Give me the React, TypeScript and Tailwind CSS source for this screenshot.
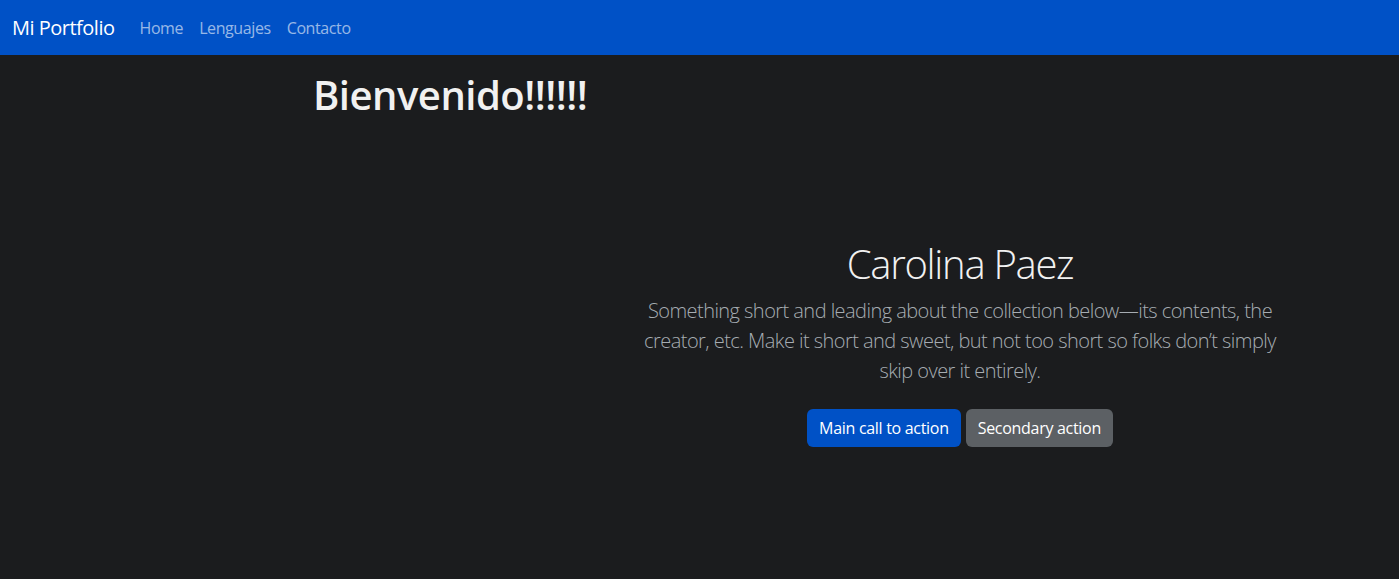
export default function App() {
  const font = { fontFamily: '"Open Sans", "Noto Sans", sans-serif' };
  return (
    <div className="min-h-[579px] bg-[#1b1c1e] text-[#dee2e6]" style={font}>
      <nav className="flex h-[55px] items-center bg-[#0051c6] px-3">
        <a href="#" className="mr-[17px] text-[20px] tracking-[-0.5px] text-white">
          Mi Portfolio
        </a>
        <div className="flex tracking-[-0.4px]">
          <a href="#" className="px-2 text-[16px] text-white/60">
            Home
          </a>
          <a href="#" className="px-2 text-[16px] text-white/60">
            Lenguajes
          </a>
          <a href="#" className="px-2 text-[16px] text-white/60">
            Contacto
          </a>
        </div>
      </nav>

      <div className="flex">
        <div className="w-[521px] shrink-0 pl-[313px] pt-[16px]">
          <h1 className="whitespace-nowrap text-[40px] font-semibold leading-[1.2] tracking-[-0.5px] text-[#f1f1f1]">
            Bienvenido!!!!!!
          </h1>
        </div>

        <section className="flex flex-1 flex-col items-center pt-[185px] text-center">
          <h2 className="text-[40px] font-light leading-[1.2] tracking-[-1.3px] text-[#f1f1f1]">
            Carolina Paez
          </h2>
          <p className="mt-2 max-w-[650px] text-[20px] font-light leading-[30px] tracking-[-0.55px] text-[#a6acb2]">
            Something short and leading about the collection below—its contents, the
            creator, etc. Make it short and sweet, but not too short so folks don’t
            simply skip over it entirely.
          </p>
          <div className="mt-[23px] flex gap-[5px] tracking-[-0.3px]">
            <button className="rounded-md bg-[#0051c6] px-3 py-[7px] text-[16px] text-white">
              Main call to action
            </button>
            <button className="rounded-md bg-[#5c6064] px-3 py-[7px] text-[16px] text-white">
              Secondary action
            </button>
          </div>
        </section>
      </div>
    </div>
  );
}
